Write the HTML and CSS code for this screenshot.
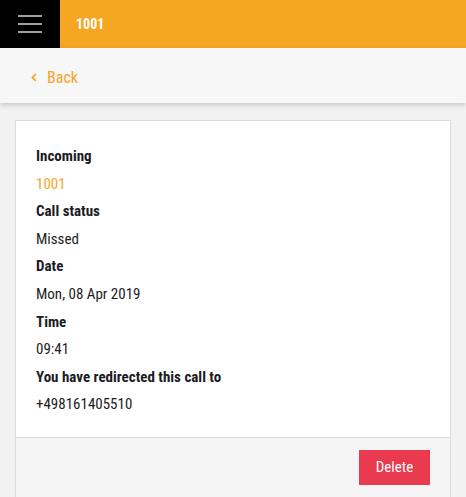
FILE: index.html
```html
<!DOCTYPE html>
<html>
<head>
<meta charset="utf-8">
<link rel="stylesheet" href="styles.css">
</head>
<body>
<header class="topbar">
  <div class="menu">
    <svg width="24" height="18" viewBox="0 0 24 18"><rect x="0" y="0" width="24" height="2" fill="#9e9e9e"/><rect x="0" y="8" width="24" height="2" fill="#9e9e9e"/><rect x="0" y="16" width="24" height="2" fill="#9e9e9e"/></svg>
  </div>
  <div class="title">1001</div>
</header>
<nav class="backbar">
  <a class="back"><svg width="6" height="9" viewBox="0 0 6 9"><path d="M4.8 1 L1.5 4.5 L4.8 8" fill="none" stroke="#f5a623" stroke-width="1.8"/></svg><span>Back</span></a>
</nav>
<main class="content">
  <section class="card">
    <div class="details">
      <div class="label">Incoming</div>
      <div class="value link">1001</div>
      <div class="label">Call status</div>
      <div class="value">Missed</div>
      <div class="label">Date</div>
      <div class="value">Mon, 08 Apr 2019</div>
      <div class="label">Time</div>
      <div class="value">09:41</div>
      <div class="label">You have redirected this call to</div>
      <div class="value">+498161405510</div>
    </div>
    <div class="footer">
      <button class="delete">Delete</button>
    </div>
  </section>
</main>
</body>
</html>
```
FILE: styles.css
```css
html, body {
  margin: 0;
  padding: 0;
  background: #f2f2f2;
  font-family: "Roboto Condensed", "DejaVu Sans Condensed", sans-serif;
  color: #1c1c24;
}
.topbar {
  display: flex;
  height: 48px;
  background: #f5a623;
}
.menu {
  width: 60px;
  height: 48px;
  background: #000;
  display: flex;
  align-items: center;
  justify-content: center;
}
.title {
  display: flex;
  align-items: center;
  padding-left: 16px;
  color: #fff;
  font-weight: bold;
  font-size: 14px;
}
.backbar {
  height: 55px;
  box-sizing: border-box;
  padding-top: 3px;
  background: #f7f7f7;
  display: flex;
  align-items: center;
  padding-left: 31px;
  box-shadow: 0 2px 5px rgba(0,0,0,0.18);
  position: relative;
}
.back {
  display: flex;
  align-items: center;
  gap: 10px;
  color: #f5a623;
  font-size: 16px;
}
.content {
  padding: 17px 15px 0 15px;
}
.card {
  background: #fff;
  border: 1px solid #dcdcdc;
}
.details {
  padding: 22px 20px 18px 20px;
}
.label {
  font-weight: bold;
  font-size: 15px;
  line-height: 27.6px;
}
.value {
  font-size: 15px;
  line-height: 27.6px;
}
.value.link {
  color: #f5a623;
}
.footer {
  border-top: 1px solid #dcdcdc;
  background: #f5f5f5;
  display: flex;
  justify-content: flex-end;
  padding: 12px 20px 20px 20px;
}
.delete {
  background: #e93a50;
  color: #fff;
  border: none;
  font-family: inherit;
  font-size: 15px;
  width: 71px;
  height: 35px;
  padding: 0;
}
```
